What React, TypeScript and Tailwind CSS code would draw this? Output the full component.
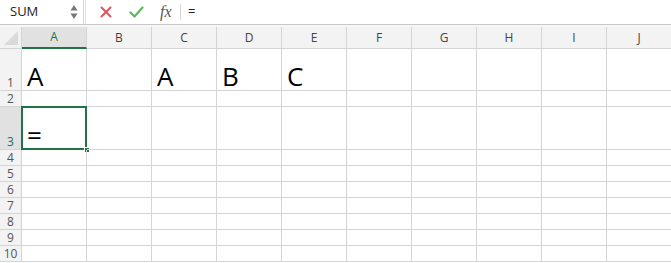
import React from "react"

const cols = ["A", "B", "C", "D", "E", "F", "G", "H", "I", "J"]
const rowHeights = [42, 16, 43, 16, 16, 16, 16, 16, 16, 16]

const cellText: Record<string, string> = {
  "1-0": "A",
  "1-2": "A",
  "1-3": "B",
  "1-4": "C",
  "3-0": "=",
}

function FormulaBar() {
  return (
    <div className="flex h-[25px] items-stretch border-b border-[#c8c8c8] bg-white">
      <div className="flex w-[84px] items-center justify-between border-r border-[#d4d4d4] pl-[10px] pr-[4px]">
        <span className="text-[13px] text-[#222]">SUM</span>
        <svg width="8" height="16" viewBox="0 0 8 16" className="mr-[1px]">
          <path d="M4 1 L7.5 6.5 L0.5 6.5 Z" fill="#777" />
          <path d="M4 15 L7.5 9.5 L0.5 9.5 Z" fill="#777" />
        </svg>
      </div>
      <div className="w-[2px] border-r border-[#e0e0e0]" />
      <div className="flex w-[94px] items-center pl-[14px]">
        <svg width="12" height="12" viewBox="0 0 12 12" className="mr-[17px]">
          <path d="M1.5 1.5 L10.5 10.5 M10.5 1.5 L1.5 10.5" stroke="#e05555" strokeWidth="2" strokeLinecap="round" />
        </svg>
        <svg width="15" height="12" viewBox="0 0 15 12" className="mr-[16px]">
          <path d="M1.5 6.5 L5.5 10.5 L13.5 1.5" stroke="#5cb85c" strokeWidth="2.2" fill="none" strokeLinecap="round" strokeLinejoin="round" />
        </svg>
        <span className="text-[16px] italic text-[#555]" style={{ fontFamily: '"Liberation Serif", serif' }}>
          fx
        </span>
      </div>
      <div className="my-[4px] w-px bg-[#d4d4d4]" />
      <div className="flex flex-1 items-center pl-[7px] text-[13px] text-[#222]">=</div>
    </div>
  )
}

export default function App() {
  return (
    <div
      className="h-[263px] w-[671px] overflow-hidden bg-white"
      style={{ fontFamily: '"Open Sans", "Liberation Sans", sans-serif' }}
    >
      <FormulaBar />
      <div className="h-[2px] bg-[#f7f7f7]" />
      <div className="grid grid-cols-[22px_repeat(10,65px)] grid-rows-[22px_42px_16px_43px_repeat(7,16px)]">
        {/* corner */}
        <div className="relative border-r border-b border-[#d4d4d4] bg-[#f2f2f2]">
          <svg width="14" height="14" viewBox="0 0 14 14" className="absolute bottom-[3px] right-[3px]">
            <path d="M14 0 L14 14 L0 14 Z" fill="#dadada" />
          </svg>
        </div>
        {cols.map((c, i) =>
          i === 0 ? (
            <div
              key={c}
              className="flex items-center justify-center border-r border-b-2 border-r-[#d4d4d4] border-b-[#217346] bg-[#e1e1e1] text-[12px] text-[#217346]"
            >
              {c}
            </div>
          ) : (
            <div
              key={c}
              className="flex items-center justify-center border-r border-b border-[#d4d4d4] bg-[#f3f3f3] text-[12px] text-[#444]"
            >
              {c}
            </div>
          )
        )}
        {rowHeights.map((_, r) => {
          const row = r + 1
          return (
            <React.Fragment key={row}>
              <div
                className={`flex items-end justify-center border-r border-b border-[#d4d4d4] text-[12px] leading-[15px] ${
                  row === 3 ? "bg-[#e1e1e1] text-[#217346]" : "bg-[#f3f3f3] text-[#555]"
                }`}
              >
                {row}
              </div>
              {cols.map((c, ci) => {
                const txt = cellText[`${row}-${ci}`]
                const selected = row === 3 && ci === 0
                return (
                  <div key={c} className="relative border-r border-b border-[#d4d4d4]">
                    {txt && (
                      <span className="absolute bottom-[1px] left-[5px] text-[26px] leading-none text-black">
                        {txt}
                      </span>
                    )}
                    {selected && (
                      <>
                        <div className="absolute -left-px -top-px bottom-[-1px] right-[-1px] border-2 border-[#217346]" />
                        <div className="absolute bottom-[-4px] right-[-4px] h-[6px] w-[6px] border border-white bg-[#217346]" />
                      </>
                    )}
                  </div>
                )
              })}
            </React.Fragment>
          )
        })}
      </div>
    </div>
  )
}
